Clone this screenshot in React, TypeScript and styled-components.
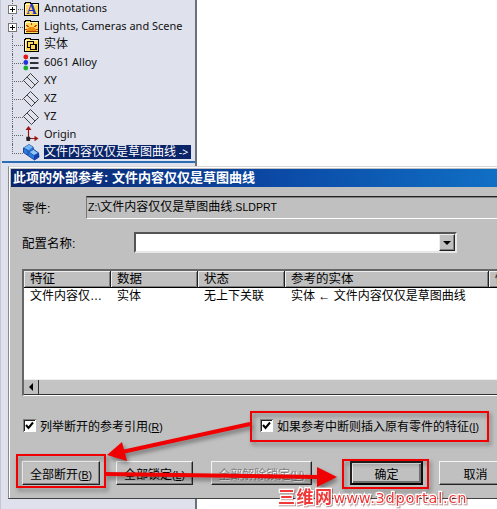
import React from 'react';
import styled, { createGlobalStyle } from 'styled-components';

const GlobalStyle = createGlobalStyle`
  html, body {
    margin: 0;
    padding: 0;
    background: #fff;
    overflow: hidden;
  }
  #root {
    width: 497px;
    height: 509px;
  }
`;

const uiFont = `"Liberation Sans", "Noto Sans CJK SC", sans-serif`;

const Desktop = styled.div`
  position: relative;
  width: 497px;
  height: 509px;
  overflow: hidden;
  background: #fff;
  font: 12px ${uiFont};
  color: #000;
`;

const TreePanel = styled.div`
  box-sizing: border-box;
  width: 197px;
  height: 509px;
  background: #dfe2ec;
  border-left: 1px solid #c4c7d2;
  border-right: 2px solid #6e7078;
`;

const TreeList = styled.div`
  box-sizing: border-box;
  height: 163px;
  border-bottom: 2px solid #2a6db5;
  margin-left: 1px;
`;

const TreeRow = styled.div`
  display: flex;
  align-items: flex-start;
  height: 18px;
`;

const Stem = styled.div<{ $last?: boolean }>`
  position: relative;
  flex: none;
  width: 21px;
  height: 18px;
  &::before {
    content: '';
    position: absolute;
    left: 10px;
    top: 0;
    height: ${(p) => (p.$last ? '10px' : '18px')};
    border-left: 1px dotted #666;
  }
  &::after {
    content: '';
    position: absolute;
    left: 10px;
    top: 9px;
    width: 11px;
    border-top: 1px dotted #666;
  }
`;

const Expander = styled.span`
  position: absolute;
  z-index: 1;
  left: 6px;
  top: 5px;
  box-sizing: border-box;
  width: 9px;
  height: 9px;
  background: #fff;
  border: 1px solid #777;
  &::before {
    content: '';
    position: absolute;
    left: 1px;
    top: 3px;
    width: 5px;
    height: 1px;
    background: #000;
  }
  &::after {
    content: '';
    position: absolute;
    left: 3px;
    top: 1px;
    width: 1px;
    height: 5px;
    background: #000;
  }
`;

const TreeIcon = styled.svg`
  flex: none;
  width: 17px;
  height: 17px;
  margin-right: 4px;
  display: block;
`;

const TreeLabel = styled.span<{ $selected?: boolean; $cjk?: boolean }>`
  height: 14px;
  line-height: 14px;
  margin-top: 1px;
  font-family: "Noto Sans", "Noto Sans CJK SC", sans-serif;
  font-size: ${(p) => (p.$cjk ? '12px' : '11px')};
  white-space: nowrap;
  color: ${(p) => (p.$selected ? '#fff' : '#111')};
  background: ${(p) => (p.$selected ? '#0a246a' : 'transparent')};
`;

const Latin = styled.span`
  font-size: 10.6px;
`;

const Dialog = styled.div`
  position: absolute;
  left: 8px;
  top: 166px;
  box-sizing: border-box;
  width: 540px;
  height: 333px;
  padding: 2px 0 0 2px;
  background: #c0c0c0;
  border-top: 1px solid #d8d8d8;
  border-left: 1px solid #8a8a8a;
  border-bottom: 1px solid #404040;
  box-shadow: inset 1px 1px 0 #fff;
`;

const TitleBar = styled.div`
  box-sizing: border-box;
  width: 486px;
  height: 18px;
  padding-left: 2px;
  background: linear-gradient(90deg, #0a246a 0%, #0b4aa6 55%, #106fc4 100%);
  color: #fff;
  font-weight: 700;
  font-size: 13px;
  line-height: 18px;
  white-space: nowrap;
`;

const DialogBody = styled.div`
  padding: 9px 0 0 11px;
`;

const FormRow = styled.div<{ $gap: number }>`
  display: flex;
  align-items: center;
  margin-bottom: ${(p) => p.$gap}px;
`;

const FieldLabel = styled.label<{ $width: number }>`
  flex: none;
  width: ${(p) => p.$width}px;
  font-size: 12.5px;
`;

const ReadOnlyField = styled.div`
  box-sizing: border-box;
  width: 460px;
  height: 23px;
  padding-left: 1px;
  line-height: 20px;
  font-size: 12px;
  white-space: nowrap;
  border-top: 1px solid #222;
  border-left: 1px solid #777;
  border-bottom: 1px solid #fff;
  box-shadow: inset 0 1px 0 #808080;
`;

const ComboBox = styled.div`
  box-sizing: border-box;
  display: flex;
  justify-content: flex-end;
  align-items: center;
  width: 323px;
  height: 21px;
  background: #fff;
  border: 2px solid;
  border-color: #555 #e8e8e8 #e8e8e8 #555;
`;

const ComboArrow = styled.div`
  box-sizing: border-box;
  display: flex;
  align-items: center;
  justify-content: center;
  width: 16px;
  height: 17px;
  background: #c0c0c0;
  border: 1px solid;
  border-color: #eee #222 #222 #eee;
  box-shadow: inset -1px -1px 0 #808080;
  &::before {
    content: '';
    border-left: 4px solid transparent;
    border-right: 4px solid transparent;
    border-top: 4px solid #000;
  }
`;

const ListFrame = styled.div`
  box-sizing: border-box;
  width: 480px;
  height: 127px;
  margin-bottom: 22px;
  background: #fff;
  display: flex;
  flex-direction: column;
  border-top: 2px solid #666;
  border-left: 2px solid #666;
  border-bottom: 1px solid #fff;
`;

const ListGrid = styled.div`
  display: grid;
  grid-template-columns: 87px 87px 87px 204px 40px;
`;

const HeaderCell = styled.div`
  box-sizing: border-box;
  height: 17px;
  padding-left: 6px;
  line-height: 17px;
  font-size: 12.5px;
  background: #c0c0c0;
  white-space: nowrap;
  overflow: hidden;
  border-right: 1px solid #222;
  border-bottom: 1px solid #000;
  box-shadow: inset 1px 1px 0 #eee, inset -1px -1px 0 #808080;
`;

const DataCell = styled.div`
  box-sizing: border-box;
  height: 16px;
  padding-left: 6px;
  line-height: 16px;
  font-size: 12px;
  white-space: nowrap;
  overflow: hidden;
`;

const ListBody = styled.div`
  flex: 1;
`;

const ScrollBar = styled.div`
  display: flex;
  height: 16px;
  background: #c4c4c4;
  border-top: 1px solid #eee;
  border-bottom: 1px solid #333;
  box-sizing: border-box;
`;

const ScrollButton = styled.div`
  box-sizing: border-box;
  display: flex;
  align-items: center;
  justify-content: center;
  width: 15px;
  background: #c0c0c0;
  border-right: 1px solid #333;
  &::before {
    content: '';
    border-top: 4px solid transparent;
    border-bottom: 4px solid transparent;
    border-right: 4px solid #000;
  }
`;

const CheckRow = styled.div`
  display: flex;
  height: 14px;
  margin-left: 1px;
  margin-bottom: 29px;
`;

const CheckItem = styled.label<{ $width?: number }>`
  display: flex;
  align-items: center;
  gap: 4px;
  width: ${(p) => (p.$width ? `${p.$width}px` : 'auto')};
  font-size: 12px;
  white-space: nowrap;
`;

const CheckBox = styled.svg`
  flex: none;
  width: 13px;
  height: 13px;
  display: block;
`;

const Mnemonic = styled.span`
  text-decoration: underline;
`;

const ButtonRow = styled.div`
  display: flex;
`;

const DialogButton = styled.button<{ $width: number; $gap: number; $primary?: boolean }>`
  flex: none;
  box-sizing: border-box;
  width: ${(p) => p.$width}px;
  height: 24px;
  margin: 0 ${(p) => p.$gap}px 0 0;
  padding: 0;
  font: 12px ${uiFont};
  color: #000;
  background: #c0c0c0;
  border: 1px solid;
  border-color: #f4f4f4 #222 #222 #f4f4f4;
  box-shadow: inset -1px -1px 0 #808080;
  ${(p) =>
    p.$primary &&
    `
    border: 2px solid;
    border-color: #222 #111 #000 #222;
    box-shadow: inset 1px 1px 0 #eee, inset -2px -2px 0 #707070;
  `}
  &:disabled {
    color: #808080;
    text-shadow: 1px 1px 0 #fff;
  }
`;

const Annotations = styled.svg`
  position: absolute;
  left: 0;
  top: 0;
  width: 497px;
  height: 509px;
  pointer-events: none;
  filter: drop-shadow(2px 3px 2px rgba(0, 0, 0, 0.4));
`;

const Watermark = styled.div`
  position: absolute;
  left: 278px;
  top: 486px;
  display: flex;
  align-items: baseline;
  white-space: nowrap;
  color: #f03838;
  -webkit-text-stroke: 2.5px #fff;
  paint-order: stroke fill;
  filter: drop-shadow(1px 1px 0 rgba(90, 0, 0, 0.4));
`;

const WatermarkCn = styled.span`
  font: 700 17px "Noto Sans CJK SC", sans-serif;
  line-height: 20px;
  letter-spacing: 1.5px;
`;

const WatermarkUrl = styled.span`
  font: 400 14.5px "DejaVu Sans", sans-serif;
  line-height: 20px;
  letter-spacing: 0.8px;
`;

const FolderBase = ({ children }: { children?: React.ReactNode }) => (
  <TreeIcon viewBox="0 0 17 17" shapeRendering="crispEdges">
    <path d="M1 15.5V3.5H2V2.5H7V3.5H15.5V15.5Z" fill="#ffd85a" stroke="#000" />
    <path d="M2 14.5V4.5H14.5" fill="none" stroke="#fff6b8" />
    {children}
  </TreeIcon>
);

const AnnotationIcon = () => (
  <FolderBase>
    <text x="8.5" y="14" textAnchor="middle" fontFamily="Liberation Serif, serif" fontWeight="700" fontSize="14" fill="#1c2fd0">
      A
    </text>
  </FolderBase>
);

const LightsIcon = () => (
  <FolderBase>
    <path d="M4 13a4.5 4.5 0 0 1 9 0Z" fill="#f08a10" />
    <path d="M8.5 5v2M3.5 7l2 2M13.5 7l-2 2M2 11h2M13 11h2" stroke="#d04000" fill="none" />
    <path d="M2.5 13.5H14.5" stroke="#a04000" />
  </FolderBase>
);

const BodiesIcon = () => (
  <FolderBase>
    <rect x="4.5" y="5.5" width="6" height="6" fill="none" stroke="#000" strokeWidth="1.4" />
    <rect x="7.5" y="8.5" width="5.5" height="5" fill="#ffd85a" stroke="#000" strokeWidth="1.4" />
  </FolderBase>
);

const MaterialIcon = () => (
  <TreeIcon viewBox="0 0 17 17">
    <circle cx="2.8" cy="3" r="2.4" fill="#e01818" />
    <circle cx="2.8" cy="8.5" r="2.4" fill="#2030d8" />
    <circle cx="2.8" cy="14" r="2.4" fill="#18b030" />
    <path d="M7 4H15.5M7 9H15.5M7 14H15.5" stroke="#303038" strokeWidth="2" />
  </TreeIcon>
);

const PlaneIcon = () => (
  <TreeIcon viewBox="0 0 17 17">
    <path d="M0.5 8.5L7.5 1.5L15.5 9.5L8.5 16.5Z" fill="none" stroke="#222" strokeWidth="0.85" />
    <path d="M4 5L12 13" fill="none" stroke="#222" strokeWidth="0.85" />
  </TreeIcon>
);

const OriginIcon = () => (
  <TreeIcon viewBox="0 0 17 17">
    <path d="M5.5 3V12.5M5.5 12.5H14" stroke="#9c1414" strokeWidth="1.2" fill="none" />
    <path d="M5.5 0L2.5 4H8.5Z" fill="#9c1414" />
    <path d="M15.5 12.5L11.5 9.8V15.2Z" fill="#9c1414" />
    <path d="M3.5 11L7 14.5M7 11L3.5 14.5M5.2 10.5V15M3 12.7H7.6" stroke="#222" strokeWidth="1.1" />
  </TreeIcon>
);

const PartIcon = () => (
  <TreeIcon viewBox="0 0 17 17">
    <path d="M0.5 4L6 0.5L10 3L10.5 5.5L15.5 9L16 13L11.5 16L0.5 8.5Z" fill="#2b7de0" stroke="#0c2a8c" strokeWidth="0.8" />
    <path d="M6 0.5L10 3L5 6.5L0.5 4Z" fill="#6fb4f4" />
    <path d="M10.5 5.5L15.5 9L11 11.5L6 8Z" fill="#8cc8f8" stroke="#0c2a8c" strokeWidth="0.6" />
    <path d="M11 11.5V16L16 13V9Z" fill="#1540b0" />
    <path d="M0.5 4L5 6.5V11" fill="none" stroke="#0c2a8c" strokeWidth="0.7" />
  </TreeIcon>
);

const Check = () => (
  <CheckBox viewBox="0 0 13 13" shapeRendering="crispEdges">
    <rect x="0" y="0" width="13" height="13" fill="#fff" />
    <path d="M0.5 13V0.5H13" fill="none" stroke="#808080" />
    <path d="M1.5 12V1.5H12" fill="none" stroke="#222" />
    <path d="M3 6L5.5 9L10 3.5" fill="none" stroke="#000" strokeWidth="2" shapeRendering="auto" />
  </CheckBox>
);

const treeItems = [
  { id: 'annotations', label: 'Annotations', icon: <AnnotationIcon />, expandable: true },
  { id: 'lights', label: 'Lights, Cameras and Scene', icon: <LightsIcon />, expandable: true },
  { id: 'bodies', label: '实体', icon: <BodiesIcon />, cjk: true },
  { id: 'material', label: '6061 Alloy', icon: <MaterialIcon /> },
  { id: 'xy', label: 'XY', icon: <PlaneIcon /> },
  { id: 'xz', label: 'XZ', icon: <PlaneIcon /> },
  { id: 'yz', label: 'YZ', icon: <PlaneIcon /> },
  { id: 'origin', label: 'Origin', icon: <OriginIcon /> },
  {
    id: 'part',
    label: (
      <>
        文件内容仅仅是草图曲线<Latin> -&gt;&nbsp;</Latin>
      </>
    ),
    icon: <PartIcon />,
    selected: true,
    cjk: true,
  },
];

const headers = ['特征', '数据', '状态', '参考的实体', '快'];
const rowCells = ['文件内容仅…', '实体', '无上下关联', '实体 ← 文件内容仅仅是草图曲线'];

const App = () => (
  <Desktop>
    <GlobalStyle />
    <TreePanel>
      <TreeList>
        {treeItems.map((item, i) => (
          <TreeRow key={item.id}>
            <Stem $last={i === treeItems.length - 1}>{item.expandable && <Expander />}</Stem>
            {item.icon}
            <TreeLabel $selected={item.selected} $cjk={item.cjk}>
              {item.label}
            </TreeLabel>
          </TreeRow>
        ))}
      </TreeList>
    </TreePanel>

    <Dialog>
      <TitleBar>此项的外部参考: 文件内容仅仅是草图曲线</TitleBar>
      <DialogBody>
        <FormRow $gap={13}>
          <FieldLabel $width={64}>零件:</FieldLabel>
          <ReadOnlyField>
            <Latin>Z:\</Latin>文件内容仅仅是草图曲线<Latin>.SLDPRT</Latin>
          </ReadOnlyField>
        </FormRow>
        <FormRow $gap={16}>
          <FieldLabel $width={112}>配置名称:</FieldLabel>
          <ComboBox>
            <ComboArrow />
          </ComboBox>
        </FormRow>
        <ListFrame>
          <ListGrid>
            {headers.map((h) => (
              <HeaderCell key={h}>{h}</HeaderCell>
            ))}
            {rowCells.map((c) => (
              <DataCell key={c}>{c}</DataCell>
            ))}
          </ListGrid>
          <ListBody />
          <ScrollBar>
            <ScrollButton />
          </ScrollBar>
        </ListFrame>
        <CheckRow>
          <CheckItem $width={237}>
            <Check />
            <span>
              列举断开的参考引用<Latin>(<Mnemonic>R</Mnemonic>)</Latin>
            </span>
          </CheckItem>
          <CheckItem>
            <Check />
            <span>
              如果参考中断则插入原有零件的特征<Latin>(<Mnemonic>I</Mnemonic>)</Latin>
            </span>
          </CheckItem>
        </CheckRow>
        <ButtonRow>
          <DialogButton $width={78} $gap={16}>
            全部断开<Latin>(<Mnemonic>B</Mnemonic>)</Latin>
          </DialogButton>
          <DialogButton $width={77} $gap={18}>
            全部锁定<Latin>(<Mnemonic>L</Mnemonic>)</Latin>
          </DialogButton>
          <DialogButton $width={101} $gap={38} disabled>
            全部解除锁定<Latin>(<Mnemonic>U</Mnemonic>)</Latin>
          </DialogButton>
          <DialogButton $width={73} $gap={16} $primary>
            确定
          </DialogButton>
          <DialogButton $width={73} $gap={0}>
            取消
          </DialogButton>
        </ButtonRow>
      </DialogBody>
    </Dialog>

    <Annotations viewBox="0 0 497 509">
      <g fill="none" stroke="#f00000" strokeWidth="2">
        <rect x="17" y="455" width="88" height="32" />
        <rect x="251" y="412" width="237" height="29" />
        <rect x="343" y="460" width="85" height="28" />
      </g>
      <path d="M250 424L122 452" stroke="#f00000" strokeWidth="4" fill="none" />
      <path d="M107 455L122 442L127 461Z" fill="#f00000" />
      <path d="M105 474L318 477" stroke="#f00000" strokeWidth="4" fill="none" />
      <path d="M337 477L317 467V487Z" fill="#f00000" />
    </Annotations>

    <Watermark>
      <WatermarkCn>三维网</WatermarkCn>
      <WatermarkUrl>www.3dportal.cn</WatermarkUrl>
    </Watermark>
  </Desktop>
);

export default App;
